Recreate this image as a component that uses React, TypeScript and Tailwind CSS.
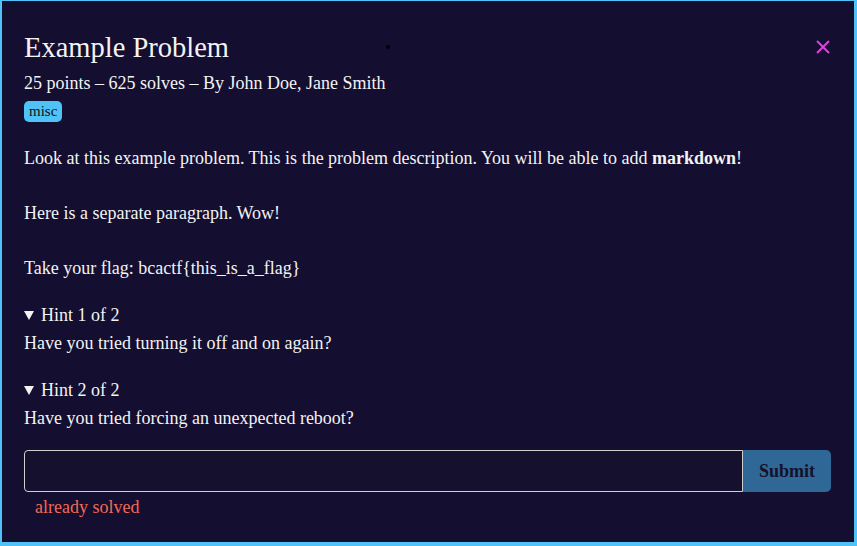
function HintLabel({ children }: { children: React.ReactNode }) {
  return (
    <div className="flex items-center">
      <svg width="10" height="9" viewBox="0 0 10 9" className="mr-[7px] mt-[1px]" fill="currentColor">
        <path d="M0 0H10L5 9Z" />
      </svg>
      <span>{children}</span>
    </div>
  );
}

export default function App() {
  return (
    <div
      className="relative h-[546px] w-[857px] overflow-hidden border-t border-l-2 border-r-[3px] border-b-4 border-[#4fc3f7] bg-[#140e30] text-[#f3f3f3]"
      style={{ fontFamily: '"Liberation Serif", "Times New Roman", serif' }}
    >
      {/* close button */}
      <button className="absolute right-[24px] top-[39px] text-[#e040e0]" aria-label="Close">
        <svg width="14" height="14" viewBox="0 0 14 14" fill="none" stroke="currentColor" strokeWidth="2">
          <path d="M1 1L13 13M13 1L1 13" />
        </svg>
      </button>
      <span className="absolute left-[384px] top-[44px] h-[4px] w-[4px] rounded-full bg-black" />

      <div className="px-[22px] pt-[29px]">
        <h1 className="text-[28.5px] leading-[36px]">Example Problem</h1>
        <p className="mt-[6px] text-[18px] leading-[22px]">
          25 points – 625 solves – By John Doe, Jane Smith
        </p>
        <div className="mt-[7px] flex">
          <span className="rounded-[5px] bg-[#4fc3f7] px-[5px] text-[15px] leading-[21px] text-[#111]">misc</span>
        </div>

        <div className="text-[18px] leading-[22px]">
          <p className="mt-[25px]">
            Look at this example problem. This is the problem description. You will be able to add{" "}
            <strong>markdown</strong>!
          </p>
          <p className="mt-[33px]">Here is a separate paragraph. Wow!</p>
          <p className="mt-[33px]">Take your flag: bcactf{"{"}this_is_a_flag{"}"}</p>

          <div className="mt-[25px]">
            <HintLabel>Hint 1 of 2</HintLabel>
          </div>
          <p className="mt-[6px]">Have you tried turning it off and on again?</p>
          <div className="mt-[25px]">
            <HintLabel>Hint 2 of 2</HintLabel>
          </div>
          <p className="mt-[6px]">Have you tried forcing an unexpected reboot?</p>
        </div>

        <form className="mt-[21px] flex w-[807px]" onSubmit={(e) => e.preventDefault()}>
          <input
            className="h-[42px] flex-1 rounded-l-[4px] border border-[#cfcfcf] bg-[#16102f] px-3 text-[18px] text-white outline-none"
            type="text"
          />
          <button className="h-[42px] w-[88px] rounded-r-[5px] bg-[#2f6896] text-[18px] font-bold text-[#14122a]">
            Submit
          </button>
        </form>
        <p className="ml-[11px] mt-[4px] text-[18px] leading-[22px] text-[#f06a55]">already solved</p>
      </div>
    </div>
  );
}
